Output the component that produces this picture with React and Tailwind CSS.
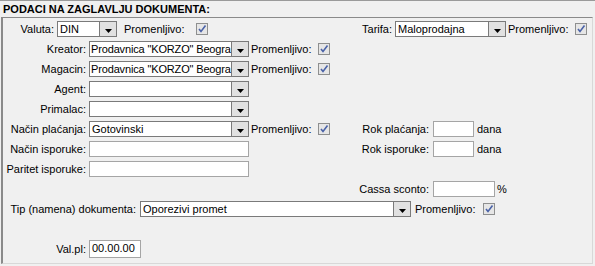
import React from 'react';

const Check = () => (
  <div className="w-[12px] h-[12px] border border-[#8e8f8f] bg-[#e6e6e6] flex items-center justify-center shrink-0">
    <svg width="10" height="10" viewBox="0 0 10 10">
      <path d="M2 5 L4 7.5 L8.5 1.5" fill="none" stroke="#4b63a8" strokeWidth="1.6" />
    </svg>
  </div>
);

const Select = ({ width, value, tight = false }) => (
  <div className={`${width} h-[16px] bg-white border border-[#7a7a7a] flex shrink-0`}>
    <div className={`flex-1 min-w-0 overflow-hidden whitespace-nowrap leading-[14px] ${tight ? 'pl-[1px] tracking-[-0.15px]' : 'pl-[2px]'}`}>{value}</div>
    <div className="w-[17px] h-full bg-[#e1e1e1] border-l border-[#7a7a7a] flex items-end justify-center pb-[3px] shrink-0">
      <svg width="7" height="4" viewBox="0 0 7 4">
        <path d="M0 0 H7 L3.5 4 Z" fill="#000" />
      </svg>
    </div>
  </div>
);

const Input = ({ width, value = '', height = 'h-[16px]' }) => (
  <div className={`${width} ${height} bg-white border border-[#a5a5a5] pl-[2px] leading-[14px] shrink-0`}>{value}</div>
);

const Label = ({ width, children, pr = 'pr-[3px]' }) => (
  <div className={`${width} ${pr} text-right whitespace-nowrap shrink-0`}>{children}</div>
);

const Prom = ({ width = 'w-[67px]', ml = 'ml-[2px]' }) => (
  <>
    <div className={`${width} ${ml} whitespace-nowrap shrink-0`}>Promenljivo:</div>
    <Check />
  </>
);

export default function App() {
  return (
    <div
      className="w-[595px] h-[266px] bg-[#f0f0f0] text-[11px] text-black border-t border-[#9a9a9a] overflow-hidden"
      style={{ fontFamily: '"Liberation Sans", Arial, sans-serif' }}
    >
      <div className="h-[16px] pl-[3px] leading-[16px] font-bold">PODACI NA ZAGLAVLJU DOKUMENTA:</div>

      <div className="ml-[1px] w-[592px] h-[247px] border-l-2 border-t border-[#8a8a8a] border-r border-r-[#d8d8d8] border-b border-b-[#d8d8d8] pt-[3px] flex flex-col gap-[4px] leading-[16px]">
        <div className="flex items-center h-[16px]">
          <Label width="w-[54px]">Valuta:</Label>
          <Select width="w-[60px]" value="DIN" />
          <Prom width="w-[72px]" ml="ml-[7px]" />
          <Label width="w-[187px]">Tarifa:</Label>
          <Select width="w-[111px]" value="Maloprodajna" />
          <Prom width="w-[67px]" ml="ml-[2px]" />
        </div>

        <div className="flex items-center h-[16px]">
          <Label width="w-[86px]">Kreator:</Label>
          <Select width="w-[160px]" tight value={'Prodavnica "KORZO" Beogra'} />
          <Prom />
        </div>

        <div className="flex items-center h-[16px]">
          <Label width="w-[86px]">Magacin:</Label>
          <Select width="w-[160px]" tight value={'Prodavnica "KORZO" Beogra'} />
          <Prom />
        </div>

        <div className="flex items-center h-[16px]">
          <Label width="w-[86px]">Agent:</Label>
          <Select width="w-[160px]" value="" />
        </div>

        <div className="flex items-center h-[16px]">
          <Label width="w-[86px]">Primalac:</Label>
          <Select width="w-[160px]" value="" />
        </div>

        <div className="flex items-center h-[16px]">
          <Label width="w-[86px]">Način plaćanja:</Label>
          <Select width="w-[160px]" value="Gotovinski" />
          <Prom />
          <Label width="w-[103px]" pr="pr-[4px]">Rok plaćanja:</Label>
          <Input width="w-[41px]" />
          <div className="ml-[3px]">dana</div>
        </div>

        <div className="flex items-center h-[16px]">
          <Label width="w-[86px]">Način isporuke:</Label>
          <Input width="w-[160px]" />
          <Label width="w-[184px]" pr="pr-[4px]">Rok isporuke:</Label>
          <Input width="w-[41px]" />
          <div className="ml-[3px]">dana</div>
        </div>

        <div className="flex items-center h-[16px]">
          <Label width="w-[86px]">Paritet isporuke:</Label>
          <Input width="w-[160px]" />
        </div>

        <div className="flex items-center h-[16px]">
          <Label width="w-[430px]" pr="pr-[4px]">Cassa sconto:</Label>
          <Input width="w-[62px]" />
          <div className="ml-[2px]">%</div>
        </div>

        <div className="flex items-center h-[16px]">
          <Label width="w-[137px]" pr="pr-[4px]">Tip (namena) dokumenta:</Label>
          <Select width="w-[271px]" value="Oporezivi promet" />
          <Prom width="w-[68px]" ml="ml-[4px]" />
        </div>

        <div className="flex items-center h-[18px] mt-[19px]">
          <Label width="w-[86px]">Val.pl:</Label>
          <Input width="w-[52px]" height="h-[18px]" value="00.00.00" />
        </div>
      </div>
    </div>
  );
}
